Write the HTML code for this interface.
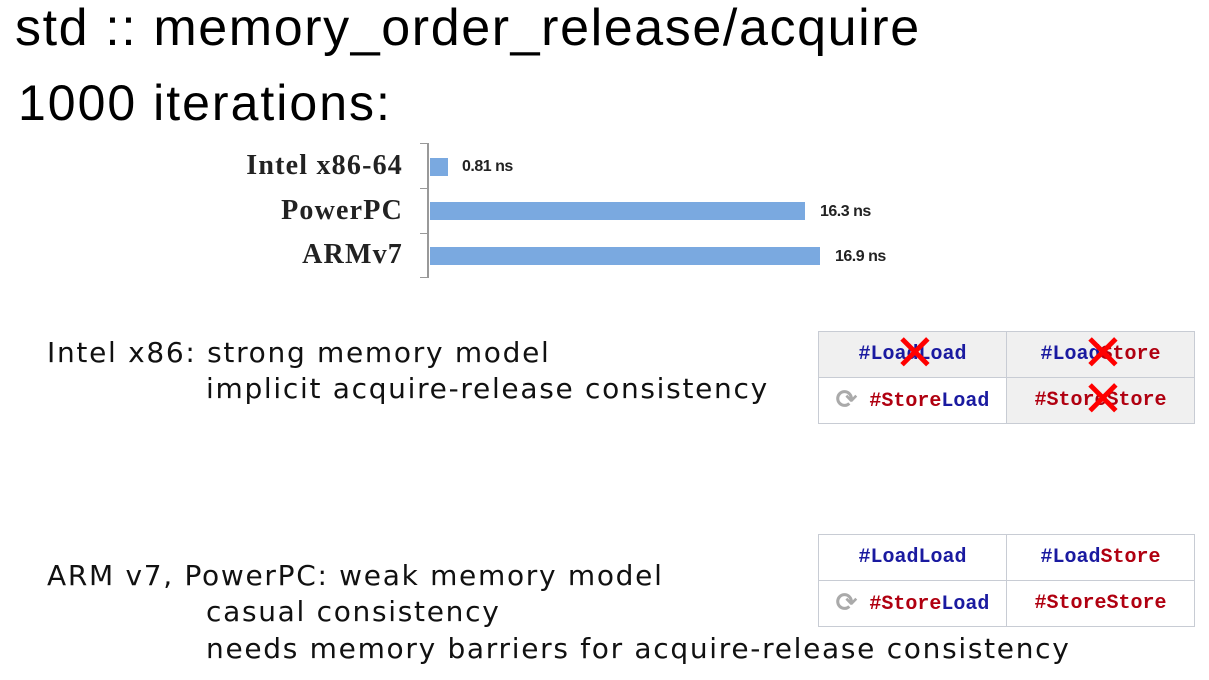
<!DOCTYPE html><html><head><style>
body{margin:0;width:1209px;height:680px;background:#fff;position:relative;overflow:hidden;font-family:"DejaVu Sans","Liberation Sans",sans-serif;}
.a{position:absolute;white-space:nowrap;}
.t{font-family:"Liberation Sans",sans-serif;font-size:52px;color:#000;letter-spacing:1.6px}
.b{font-size:28px;color:#111;letter-spacing:1.7px}
.lab{font-family:"Liberation Serif",serif;font-weight:bold;font-size:28px;right:806px;color:#222;letter-spacing:1.2px}
.v{font-family:"Liberation Sans",sans-serif;font-weight:bold;font-size:16px;color:#222;letter-spacing:-0.5px}
.bar{position:absolute;background:#7aa9e0;left:430px;height:18px;}
table{position:absolute;border-collapse:collapse;font-family:"Liberation Mono",monospace;font-weight:bold;font-size:20px;}
td{border:1.5px solid #c8ccd4;width:187px;height:45px;text-align:center;padding:0;position:relative;line-height:20px;vertical-align:middle}
.bl{color:#1a1aa0}.rd{color:#b00010}
.x{position:absolute;color:#f00;font-family:"DejaVu Sans";font-weight:normal;font-size:50px;top:-4px;line-height:50px}
.ic{color:#aaa;font-size:26px;font-family:'DejaVu Sans';font-weight:bold;vertical-align:-2px}
</style></head><body>
<div class="a t" style="left:15px;top:-2px">std :: memory_order_release/acquire</div>
<div class="a t" style="left:18px;top:74px;font-size:50px;letter-spacing:2px">1000 iterations:</div>
<div class="a" style="left:427px;top:143px;width:2px;height:135px;background:#999"></div>
<div class="a" style="left:420px;top:143px;width:8px;height:1px;background:#999"></div>
<div class="a" style="left:420px;top:188px;width:8px;height:1px;background:#999"></div>
<div class="a" style="left:420px;top:233px;width:8px;height:1px;background:#999"></div>
<div class="a" style="left:420px;top:277px;width:8px;height:1px;background:#999"></div>
<div class="a lab" style="top:150px">Intel x86-64</div>
<div class="a lab" style="top:195px">PowerPC</div>
<div class="a lab" style="top:239px">ARMv7</div>
<div class="bar" style="top:158px;width:18px"></div>
<div class="bar" style="top:202px;width:375px"></div>
<div class="bar" style="top:247px;width:390px"></div>
<div class="a v" style="left:462px;top:158px">0.81 ns</div>
<div class="a v" style="left:820px;top:203px">16.3 ns</div>
<div class="a v" style="left:835px;top:248px">16.9 ns</div>
<div class="a b" style="left:47px;top:336px">Intel x86: strong memory model</div>
<div class="a b" style="left:206px;top:372px">implicit acquire-release consistency</div>
<div class="a b" style="left:47px;top:559px">ARM v7, PowerPC: weak memory model</div>
<div class="a b" style="left:206px;top:595px">casual consistency</div>
<div class="a b" style="left:206px;top:632px">needs memory barriers for acquire-release consistency</div>
<table style="left:818px;top:331px">
<tr><td style="background:#f0f0f0"><span class="bl">#LoadLoad</span><span class="x" style="left:75px">✕</span></td><td style="background:#f0f0f0"><span class="bl">#Load</span><span class="rd">Store</span><span class="x" style="left:75px">✕</span></td></tr>
<tr><td style="background:#fff"><span class="ic">⟳</span> <span class="rd">#Store</span><span class="bl">Load</span></td><td style="background:#f0f0f0"><span class="rd">#StoreStore</span><span class="x" style="left:75px">✕</span></td></tr>
</table>
<table style="left:818px;top:534px">
<tr><td><span class="bl">#LoadLoad</span></td><td><span class="bl">#Load</span><span class="rd">Store</span></td></tr>
<tr><td><span class="ic">⟳</span> <span class="rd">#Store</span><span class="bl">Load</span></td><td><span class="rd">#StoreStore</span></td></tr>
</table>
</body></html>
